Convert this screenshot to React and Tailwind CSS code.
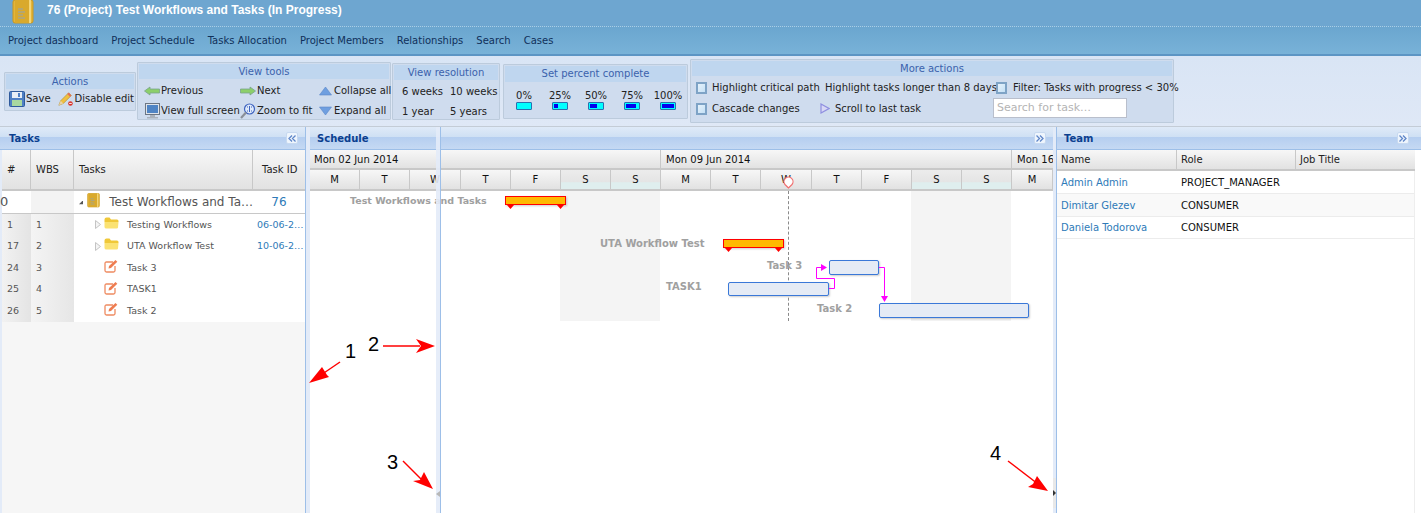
import React from "react";

const Notebook = ({ s = 22 }) => (
  <svg width={s} height={s + 2} viewBox="0 0 22 24">
    <rect x="1" y="0" width="20" height="23" rx="2" fill="#e3b53a" stroke="#c9971f" />
    <rect x="3" y="0" width="15" height="23" fill="#d9a92c" />
    <rect x="17" y="0" width="2" height="23" fill="#f4d678" />
    <path d="M6 9h5M6 12h7M6 15h5M6 18h7" stroke="#8fa3b5" strokeWidth="1" />
  </svg>
);
const Floppy = () => (
  <svg width="16" height="16" viewBox="0 0 16 16">
    <rect x="0.5" y="0.5" width="15" height="15" rx="1" fill="#4f7fc4" stroke="#2f5a9c" />
    <rect x="3" y="1" width="10" height="6" fill="#e8eef6" />
    <rect x="3" y="9" width="10" height="6" fill="#a9d8a0" />
    <rect x="9" y="2" width="2" height="4" fill="#4f7fc4" />
  </svg>
);
const Pencil = () => (
  <svg width="18" height="16" viewBox="0 0 18 16">
    <path d="M1 15l2-5L12 1l3 3-9 9z" fill="#f0c040" stroke="#b08a28" strokeWidth="0.7" />
    <path d="M12 1l3 3-1.5 1.5-3-3z" fill="#e46a5a" />
    <path d="M1 15l2-5 3 3z" fill="#e8d3a8" />
    <circle cx="14" cy="13" r="2.6" fill="#d9342b" />
    <path d="M12.5 13h3" stroke="#fff" />
  </svg>
);
const ArrowL = ({ flip }) => (
  <svg width="16" height="10" viewBox="0 0 16 10" style={flip ? { transform: "scaleX(-1)" } : undefined}>
    <path d="M0.5 5L6 1v2h9.5v4H6v2z" fill="#8ccf6a" stroke="#7aa38a" strokeWidth="0.8" />
  </svg>
);
const Monitor = () => (
  <svg width="15" height="16" viewBox="0 0 15 16">
    <rect x="0.5" y="0.5" width="14" height="11" fill="#dfe4ea" stroke="#6c7684" />
    <rect x="2" y="2" width="11" height="8" fill="#4f84c4" />
    <path d="M5 12h5v2H5zM2 14h11v1.5H2z" fill="#aab2bc" />
  </svg>
);
const Zoom = () => (
  <svg width="16" height="16" viewBox="0 0 16 16">
    <circle cx="9.5" cy="6" r="5" fill="#dfeafa" stroke="#3f64c0" strokeWidth="1.2" />
    <path d="M7 4h1M11 4h1M7 8h1M11 8h1M9.5 3v6" stroke="#3f64c0" />
    <path d="M6 9.5L1 15" stroke="#8a8f98" strokeWidth="2.2" />
  </svg>
);
const Tri = ({ down }) => (
  <svg width="13" height="10" viewBox="0 0 13 10">
    <path d={down ? "M0.5 1h12L6.5 9z" : "M0.5 9h12L6.5 1z"} fill="#6f9fe0" stroke="#5a88c8" strokeWidth="0.6" />
  </svg>
);
const Check = () => (
  <span className="block w-[11px] h-[12px] border-2 border-[#7ea3c6] bg-gradient-to-br from-[#e6f2fb] to-[#c4e0f5]" />
);
const Play = () => (
  <svg width="10" height="11" viewBox="0 0 10 11">
    <path d="M1 1l8 4.5L1 10z" fill="#d8d8f5" stroke="#8f8fe0" strokeWidth="1.2" />
  </svg>
);
const Folder = () => (
  <svg width="15" height="12" viewBox="0 0 15 12">
    <path d="M0.5 2.5q0-2 2-2h3l1.5 2h6q1.5 0 1.5 1.5v1H0.5z" fill="#f0c838" />
    <path d="M0.5 5h14l-0.5 5.5q0 1-1.5 1h-10q-2 0-2-1.5z" fill="#fbe272" />
  </svg>
);
const Edit = () => (
  <svg width="14" height="14" viewBox="0 0 14 14" fill="none">
    <path d="M9 3H2.5Q1 3 1 4.500V11.500Q1 13 2.500 13H9.500Q11 13 11 11.500V7" stroke="#ee8a60" strokeWidth="1.300" />
    <path d="M4.500 9.500L5 7L11.500 1L13.300 2.800L7 9z" fill="#ee7c50" />
  </svg>
);
const TreeTri = ({ open }) =>
  open ? (
    <svg width="6" height="6" viewBox="0 0 6 6"><path d="M6 0v6H0z" fill="#555" /></svg>
  ) : (
    <svg width="6" height="9" viewBox="0 0 6 9"><path d="M0.500 0.500L5.500 4.500L0.500 8.500z" fill="#f4f4f4" stroke="#c4c4c4" /></svg>
  );
const Pct = ({ w }) => (
  <span className="block w-[16px] h-[8px] border border-[#2b6fb0] bg-[#00ffff] relative rounded-[1px]">
    <span className="absolute left-[1px] top-[1px] h-[4px] bg-[#0000ee]" style={{ width: w }} />
  </span>
);

const Group = ({ title, className, titleClass, children }) => (
  <div className={"border border-[#bccbdc] bg-[#cfdcee] p-[1px] rounded-[1px] " + className}>
    <div className={"bg-[#bfd6ef] text-[#3b62ac] text-center leading-[15px] " + titleClass}>{title}</div>
    {children}
  </div>
);
const Tool = ({ icon, label, className = "" }) => (
  <div className={"flex items-center whitespace-nowrap " + className}>
    <span className="w-[16px] flex justify-center shrink-0">{icon}</span>
    <span className="ml-[1px]">{label}</span>
  </div>
);

const Collapse = ({ right }) => (
  <span className="w-[12px] h-[12px] rounded-[2px] border border-[#c7d9f0] bg-[#eef5fd] flex items-center justify-center">
    <svg width="8" height="7" viewBox="0 0 8 7" fill="none" stroke="#5f86c8" strokeWidth="1.300" style={right ? undefined : { transform: "scaleX(-1)" }}>
      <path d="M0.500 0.500L3.500 3.500L0.500 6.500M4 0.500L7 3.500L4 6.500" />
    </svg>
  </span>
);
const PanelTitle = ({ title, right, btn, className = "" }) => (
  <div className={"h-[23px] flex items-center justify-between border-b border-[#9dbfe8] bg-[linear-gradient(to_bottom,#dfeaf8_0%,#cfe0f4_45%,#b5cef0_46%,#c5d9f3_100%)] font-bold text-[#0b3f8f] " + className}>
    <span>{title}</span>
    {btn && <Collapse right={right} />}
  </div>
);
const Splitter = ({ className = "" }) => (
  <div className={"bg-[#e3ebf8] border-r border-[#9dbfe8] " + className} />
);

const headCell = "bg-gradient-to-b from-[#f7f7f7] to-[#e2e2e2] border-b-2 border-[#c8c8c8] flex items-center";

const rows = [
  { n: "1", w: "1", kind: "folder", t: "Testing Workflows", d: "06-06-2…" },
  { n: "17", w: "2", kind: "folder", t: "UTA Workflow Test", d: "10-06-2…" },
  { n: "24", w: "3", kind: "task", t: "Task 3" },
  { n: "25", w: "4", kind: "task", t: "TASK1" },
  { n: "26", w: "5", kind: "task", t: "Task 2" },
];
const week = [
  ["M", "w-[50px]"], ["T", "w-[50px]"], ["W", "w-[51px]"], ["T", "w-[50px]"], ["F", "w-[50px]"],
  ["S", "w-[50px] we"], ["S", "w-[50px] we"],
  ["M", "w-[50px]"], ["T", "w-[50px]"], ["W", "w-[51px]"], ["T", "w-[50px]"], ["F", "w-[50px]"],
  ["S", "w-[50px] we"], ["S", "w-[50px] we"],
  ["M", "w-[41px]"],
];
const Summary = ({ className }) => (
  <div className={"absolute h-[9px] bg-[#ffb900] border border-[#ff0000] shadow-[1px_1px_2px_rgba(0,0,0,0.2)] " + className}>
    <svg className="absolute left-[1px] top-[8px]" width="7" height="4" viewBox="0 0 7 4"><path d="M0 0h7L3.500 4z" fill="#f00" /></svg>
    <svg className="absolute right-[1px] top-[8px]" width="7" height="4" viewBox="0 0 7 4"><path d="M0 0h7L3.500 4z" fill="#f00" /></svg>
  </div>
);
const Bar = ({ className }) => (
  <div className={"absolute bg-[#e5ebf5] border border-[#3a78d8] rounded-[2px] shadow-[1px_1px_2px_rgba(0,0,0,0.2)] " + className} />
);
const Label = ({ className, children }) => (
  <div className={"absolute font-bold text-[#a0a0a0] whitespace-nowrap leading-[12px] " + className}>{children}</div>
);
const Num = ({ className, children }) => (
  <div className={"absolute text-[20px] leading-[22px] text-black font-['Liberation_Sans',sans-serif] " + className}>{children}</div>
);

export default function App() {
  return (
    <div className="relative w-[1421px] h-[513px] overflow-hidden flex flex-col bg-white text-[10px] text-[#222] font-['DejaVu_Sans','Noto_Sans',sans-serif]">
      {/* Title */}
      <div className="h-[27px] shrink-0 bg-[#6ea6d0] border-b border-dotted border-[#a9cfe6] flex items-center pl-[12px]">
        <span className="-mt-[3px] h-[24px] overflow-hidden"><Notebook /></span>
        <span className="ml-[13px] -mt-[6px] font-['Liberation_Sans',sans-serif] font-bold text-[12px] text-white">76 (Project) Test Workflows and Tasks (In Progress)</span>
      </div>
      {/* Nav */}
      <div className="h-[29px] shrink-0 bg-gradient-to-b from-[#6ba6cf] to-[#78b2d8] border-b-2 border-[#5c95c4] flex items-center pl-[8px] gap-[13px] text-[#10305a]">
        {["Project dashboard", "Project Schedule", "Tasks Allocation", "Project Members", "Relationships", "Search", "Cases"].map((t) => (
          <span key={t}>{t}</span>
        ))}
      </div>
      {/* Toolbar */}
      <div className="h-[71px] shrink-0 bg-gradient-to-b from-[#d9e5f5] to-[#dfe8f6] border-b border-[#c4ccd6] flex items-center gap-[1px] pl-[4px]">
        <Group title="Actions" className="w-[132px] h-[39px]">
          <div className="flex items-center gap-[7px] pl-[3px] mt-[2px]">
            <Tool icon={<Floppy />} label="Save" />
            <Tool icon={<Pencil />} label="Disable edit" />
          </div>
        </Group>
        <Group title="View tools" className="w-[254px] h-[58px]">
          <div className="grid grid-cols-[96px_77px_76px] gap-y-[3px] pl-[5px] pt-[3px] leading-[17px]">
            <Tool icon={<ArrowL />} label="Previous" />
            <Tool icon={<ArrowL flip />} label="Next" />
            <Tool icon={<Tri />} label="Collapse all" />
            <Tool icon={<Monitor />} label="View full screen" />
            <Tool icon={<Zoom />} label="Zoom to fit" />
            <Tool icon={<Tri down />} label="Expand all" />
          </div>
        </Group>
        <Group title="View resolution" className="w-[108px] h-[57px]">
          <div className="grid grid-cols-[48px_50px] gap-y-[3px] pl-[8px] pt-[3px] leading-[17px]">
            <span>6 weeks</span><span>10 weeks</span><span>1 year</span><span>5 years</span>
          </div>
        </Group>
        <Group title="Set percent complete" className="w-[185px] h-[55px] ml-[2px]" titleClass="leading-[16px]">
          <div className="grid grid-cols-[repeat(5,36px)] pl-[1px] mt-[7px] leading-[13px]">
            {[["0%", 0], ["25%", 4], ["50%", 7], ["75%", 10], ["100%", 12]].map(([t, w]) => (
              <div key={t} className="flex flex-col items-center">
                <span>{t}</span>
                <Pct w={w} />
              </div>
            ))}
          </div>
        </Group>
        <Group title="More actions" className="w-[484px] h-[64px] ml-[1px]">
          <div className="grid grid-cols-[124px_176px_1fr] gap-y-[3px] pl-[4px] pt-[3px] leading-[17px]">
            <div className="flex items-center gap-[5px]"><Check /><span>Highlight critical path</span></div>
            <div className="flex items-center gap-[5px]"><Play /><span className="whitespace-nowrap">Highlight tasks longer than 8 days</span></div>
            <div className="flex items-center gap-[6px]"><Check /><span className="whitespace-nowrap">Filter: Tasks with progress &lt; 30%</span></div>
            <div className="flex items-center gap-[5px]"><Check /><span>Cascade changes</span></div>
            <div className="flex items-center gap-[5px]"><Play /><span>Scroll to last task</span></div>
            <div className="-ml-[3px] -mt-[1px] w-[134px] h-[20px] bg-white border border-[#b9bfcc] text-[#b4b4b4] text-[11px] leading-[18px] pl-[3px]">Search for task…</div>
          </div>
        </Group>
      </div>
      {/* Main */}
      <div className="flex-1 min-h-0 flex">
        {/* Tasks */}
        <div className="w-[306px] shrink-0 flex flex-col bg-[#f6f6f6] border-r border-[#9dbfe8]">
          <PanelTitle title="Tasks" btn className="pl-[9px] pr-[7px]" />
          <div className="pl-[2px] bg-[#e3ebf8] flex-1 flex flex-col min-h-0">
            <div className="bg-[#f6f6f6] flex-1 min-h-0">
              <div className="grid grid-cols-[29px_43px_179px_52px] h-[41px]">
                <div className={headCell + " border-r border-r-[#c8c8c8] pl-[5px]"}>#</div>
                <div className={headCell + " border-r border-r-[#c8c8c8] pl-[5px]"}>WBS</div>
                <div className={headCell + " border-r border-r-[#c8c8c8] pl-[5px]"}>Tasks</div>
                <div className={headCell + " pl-[9px]"}>Task ID</div>
              </div>
              <div className="grid grid-cols-[29px_43px_179px_52px] h-[23px] bg-white border-b border-[#c8c8c8] text-[13px] text-[#555] items-center">
                <div className="-ml-[2px]">0</div>
                <div className="h-full bg-[#f3f3f3]" />
                <div className="flex items-center pl-[5px] whitespace-nowrap">
                  <TreeTri open />
                  <span className="ml-[4px] -mt-[3px]"><Notebook s={13} /></span>
                  <span className="ml-[9px] text-[12px]">Test Workflows and Ta…</span>
                </div>
                <div className="text-center text-[#2e7ab8] text-[12px]">76</div>
              </div>
              {rows.map((r) => (
                <div key={r.n} className="grid grid-cols-[29px_43px_179px_52px] h-[21.6px] bg-white items-center text-[#555] text-[9.5px]">
                  <div className="h-full flex items-center pl-[5px] bg-gradient-to-r from-[#f2f2f2] to-[#e4e4e4]">{r.n}</div>
                  <div className="h-full flex items-center pl-[5px] bg-gradient-to-r from-[#f4f4f4] to-[#e6e6e6]">{r.w}</div>
                  <div className="flex items-center whitespace-nowrap pl-[21px]">
                    <span className="w-[9px] flex">{r.kind === "folder" && <TreeTri />}</span>
                    <span className="-mt-[4px] w-[23px]">{r.kind === "folder" ? <Folder /> : <Edit />}</span>
                    <span>{r.t}</span>
                  </div>
                  <div className="text-[#2e7ab8] pl-[4px] whitespace-nowrap">{r.d}</div>
                </div>
              ))}
            </div>
          </div>
        </div>
        <Splitter className="w-[4px] shrink-0 border-r-0" />
        {/* Schedule */}
        <div className="relative w-[743px] shrink-0 flex flex-col">
          <PanelTitle title="Schedule" btn right className="pl-[7px] pr-[7px]" />
          <div className="flex h-[20px]">
            <div className={headCell + " w-[351px] border-r border-r-[#c8c8c8] pl-[4px] text-[#111]"}>Mon 02 Jun 2014</div>
            <div className={headCell + " w-[351px] border-r border-r-[#c8c8c8] pl-[5px] text-[#111]"}>Mon 09 Jun 2014</div>
            <div className={headCell + " w-[41px] pl-[5px] text-[#111] whitespace-nowrap overflow-hidden"}>Mon 16 Jun 2014</div>
          </div>
          <div className="flex h-[21px]">
            {week.map(([d, w], i) => (
              <div key={i} className={"h-full text-[#111] flex items-center justify-center border-b-2 border-[#c8c8c8] border-r border-r-[#c8c8c8] " + (w.includes("we") ? "bg-[linear-gradient(to_bottom,#ececec_0%,#e4e4e4_65%,#dfeeee_66%,#dfeeee_100%)] " : "bg-gradient-to-b from-[#f7f7f7] to-[#e2e2e2] ") + (w.includes("51") ? "w-[51px]" : w.includes("41") ? "w-[41px]" : "w-[50px]")}>{d}</div>
            ))}
          </div>
          <div className="relative flex-1 overflow-hidden bg-white">
            <div className="absolute left-[250px] top-0 w-[100px] h-[130px] bg-[#f4f4f4]" />
            <div className="absolute left-[601px] top-0 w-[100px] h-[130px] bg-[#f4f4f4]" />
            <div className="absolute left-[478px] top-0 h-[130px] border-l border-dashed border-[#8a8a8a]" />
            <Label className="left-[40px] top-[4px] text-[9.5px]">Test Workflows and Tasks</Label>
            <Summary className="left-[195px] top-[5px] w-[61px]" />
            <Label className="left-[290px] top-[47px]">UTA Workflow Test</Label>
            <Summary className="left-[413px] top-[48px] w-[61px]" />
            <Label className="left-[457px] top-[69px]">Task 3</Label>
            <Bar className="left-[519px] top-[69px] w-[50px] h-[15px]" />
            <Label className="left-[356px] top-[90px]">TASK1</Label>
            <Bar className="left-[418px] top-[91px] w-[101px] h-[14px]" />
            <Label className="left-[507px] top-[112px]">Task 2</Label>
            <Bar className="left-[569px] top-[112px] w-[150px] h-[15px]" />
            <svg className="absolute left-0 top-0" width="743" height="140" fill="none">
              <path d="M519 97.500H524.500V87.500H506.500V76.500H516" stroke="#ff00ff" strokeWidth="1" />
              <path d="M511 73L517 76.500L511 80z" fill="#ff00ff" />
              <path d="M569 76.500H574.500V110" stroke="#ff00ff" strokeWidth="1" />
              <path d="M571 105H578L574.500 111z" fill="#ff00ff" />
            </svg>
          </div>
          <div className="absolute left-[473px] top-[49px] w-[11px] h-[13px]">
            <svg width="11" height="13" viewBox="0 0 11 13"><path d="M5.500 12L2 8.500A4.500 4.500 0 1 1 9 8.500z" fill="#fff" stroke="#f07070" strokeWidth="1.200" /></svg>
          </div>
          {/* Overlay splitter */}
          <div className="absolute left-[126px] top-0 bottom-0 w-[5px] bg-[#e3ebf8]/90 border-r border-[#9dbfe8]">
            <div className="absolute left-0 top-[363px] w-[4px] h-[8px] flex items-center">
              <svg width="4" height="6" viewBox="0 0 4 6"><path d="M4 0v6L0 3z" fill="#b8b8b8" /></svg>
            </div>
          </div>
        </div>
        {/* Right splitter */}
        <div className="relative w-[4px] shrink-0 bg-[#e3ebf8] border-r border-[#9dbfe8]">
          <div className="absolute left-0 top-[351px] w-[3px] h-[30px] bg-[#e8e8e8] flex items-center">
            <svg width="3" height="6" viewBox="0 0 3 6"><path d="M0 0v6l3-3z" fill="#333" /></svg>
          </div>
        </div>
        {/* Team */}
        <div className="flex-1 min-w-0 flex flex-col">
          <PanelTitle title="Team" btn right className="pl-[7px] pr-[12px]" />
          <div className="w-[358px] border-r border-[#eeeeee] flex-1">
            <div className="grid grid-cols-[120px_119px_119px] h-[21px]">
              <div className={headCell + " border-r border-r-[#c8c8c8] pl-[4px]"}>Name</div>
              <div className={headCell + " border-r border-r-[#c8c8c8] pl-[4px]"}>Role</div>
              <div className={headCell + " pl-[4px]"}>Job Title</div>
            </div>
            {[
              ["Admin Admin", "PROJECT_MANAGER", "bg-white h-[23px]"],
              ["Dimitar Glezev", "CONSUMER", "bg-[#f9f9f9] h-[23px]"],
              ["Daniela Todorova", "CONSUMER", "bg-white h-[22px]"],
            ].map(([n, r, c]) => (
              <div key={n} className={"grid grid-cols-[120px_119px_119px] items-center border-b border-[#ececec] text-[#111] " + c}>
                <span className="pl-[4px] text-[#2e7ab8]">{n}</span>
                <span className="pl-[4px]">{r}</span>
                <span />
              </div>
            ))}
          </div>
        </div>
      </div>
      {/* Annotations */}
      <Num className="left-[345px] top-[340px]">1</Num>
      <Num className="left-[368px] top-[333px]">2</Num>
      <Num className="left-[387px] top-[451px]">3</Num>
      <Num className="left-[990px] top-[442px]">4</Num>
      <svg className="absolute left-0 top-0 pointer-events-none" width="1421" height="513" fill="none">
        <g stroke="#ff0000" strokeWidth="1.500">
          <path d="M340 362L318 377" />
          <path d="M383 346H420" />
          <path d="M403 461L424 482" />
          <path d="M1008 461L1038 484" />
        </g>
        <g fill="#ff0000">
          <path d="M309 383L322 367L327 375L329 377z" />
          <path d="M435 346L416 339L421 346L416 353z" />
          <path d="M433 489L424 472L420 480L413 481z" />
          <path d="M1048 491L1037 476L1033 484L1028 487z" />
        </g>
      </svg>
    </div>
  );
}
